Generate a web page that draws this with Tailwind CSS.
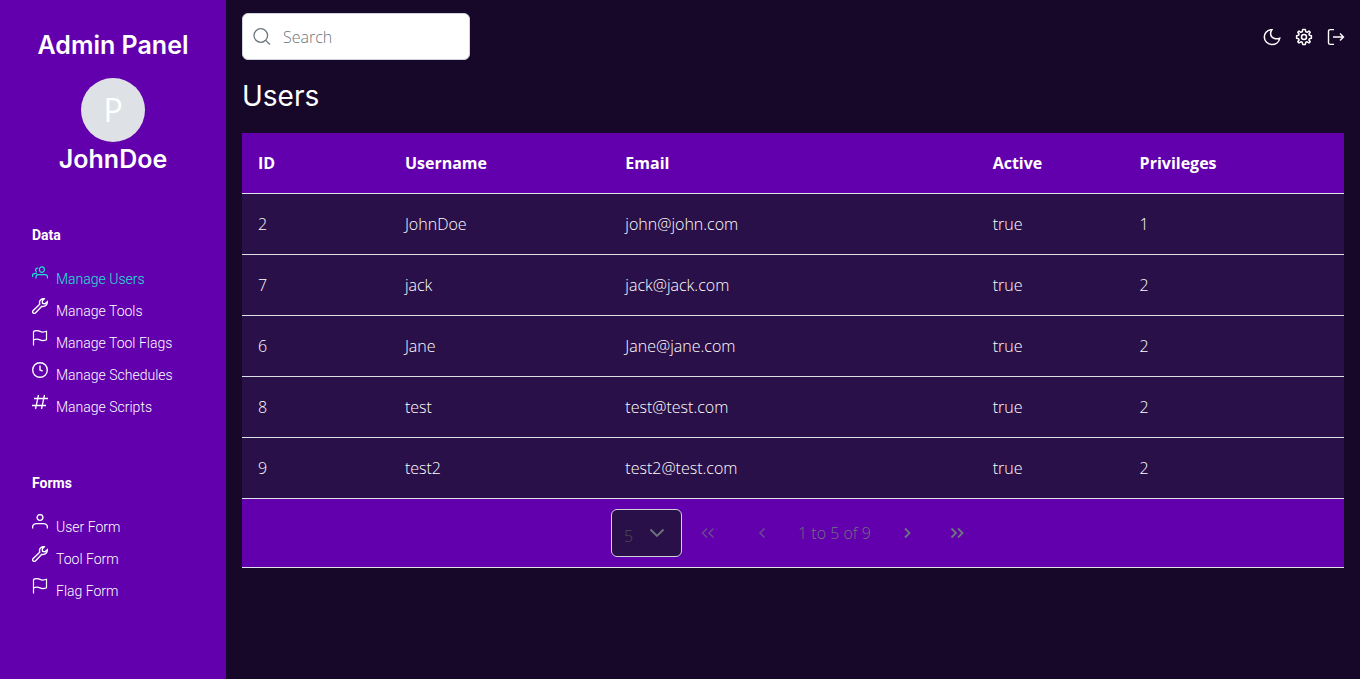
<!DOCTYPE html>
<html lang="en">
<head>
<meta charset="utf-8">
<meta name="viewport" content="width=device-width, initial-scale=1">
<title>Admin Panel</title>
<script src="https://cdn.jsdelivr.net/npm/@tailwindcss/browser@4"></script>
</head>
<body class="min-h-screen bg-[#170729] font-['Open_Sans',sans-serif] text-base font-light text-white">
<svg class="hidden">
  <defs>
    <symbol id="wrench" viewBox="0 0 16 16"><path d="M12.2.8C10 .3 7.400 2 7.500 4.500L7.700 6.200L1 12.700C.4 13.400.4 14.300 1.100 14.900C1.800 15.600 2.700 15.600 3.400 14.900L9.800 8.300C12.800 9.200 15.600 7 15.300 3.600L13 5.700L10.600 5.400L10.200 3Z"/></symbol>
    <symbol id="flag" viewBox="0 0 16 16"><path d="M1.500 15.500V1.500C4 0 6 .4 8 1.400C10 2.400 12 2.300 14.500 1.300V9.800C12 10.900 10 10.900 8 9.900C6 8.900 4 8.900 1.500 10"/></symbol>
    <symbol id="user" viewBox="0 0 16 16"><circle cx="8" cy="3.500" r="2.900"/><path d="M.6 14.500V13C.6 11 2.500 9.600 4.500 9.600H11.500C13.500 9.600 15.400 11 15.400 13V14.500"/></symbol>
  </defs>
</svg>
<div class="flex min-h-screen">
  <aside class="w-[226px] shrink-0 bg-[#6200ad] px-8 pt-7">
    <header class="flex flex-col items-center font-['Inter',sans-serif] text-[25px] font-semibold">
      <h1 class="leading-[34px] whitespace-nowrap">Admin Panel</h1>
      <div class="mt-4 flex size-16 items-center justify-center rounded-full bg-[#dee2e6] font-['Open_Sans',sans-serif] text-[32px] font-normal">P</div>
      <p class="leading-[34px]">JohnDoe</p>
    </header>
    <nav class="font-['Roboto',sans-serif] text-sm">
      <h2 class="mt-[49px] leading-5 font-bold">Data</h2>
      <ul class="mt-[17px]">
        <li><a href="#" class="flex h-8 gap-2 text-[#22e0d5]">
          <svg class="mt-1 size-4" viewBox="0 0 16 16" fill="none" stroke="currentColor" stroke-width="1.200"><ellipse cx="9.900" cy="3.600" rx="2.500" ry="2.800"/><path d="M6.200 2.200C3.500 1.500 2.600 4.600 4.800 5.800M4 12.500V11C4 9.600 5.200 8.700 6.500 8.700H13C14.500 8.700 15.500 9.600 15.500 11V12.500M.5 11V9.500C.5 8.200 1.700 7.300 3.500 7.300H5"/></svg>
          <span class="mt-[7px] leading-5">Manage Users</span></a></li>
        <li><a href="#" class="flex h-8 gap-2"><svg class="mt-1 size-4" fill="none" stroke="currentColor" stroke-width="1.400"><use href="#wrench"/></svg><span class="mt-[7px] leading-5">Manage Tools</span></a></li>
        <li><a href="#" class="flex h-8 gap-2"><svg class="mt-1 size-4" fill="none" stroke="currentColor" stroke-width="1.200"><use href="#flag"/></svg><span class="mt-[7px] leading-5">Manage Tool Flags</span></a></li>
        <li><a href="#" class="flex h-8 gap-2"><svg class="mt-1 size-4" viewBox="0 0 16 16" fill="none" stroke="currentColor" stroke-width="1.400"><circle cx="8" cy="8" r="7.300"/><path d="M8 3.500V8L10.700 9.200"/></svg><span class="mt-[7px] leading-5">Manage Schedules</span></a></li>
        <li><a href="#" class="flex h-8 gap-2"><svg class="mt-1 size-4" viewBox="0 0 16 16" fill="none" stroke="currentColor" stroke-width="1.300"><path d="M6.500 1L3.500 15M12.500 1L9.500 15M2 4.500H16M0 11.500H14"/></svg><span class="mt-[7px] leading-5">Manage Scripts</span></a></li>
      </ul>
      <h2 class="mt-[51px] leading-5 font-bold">Forms</h2>
      <ul class="mt-[17px]">
        <li><a href="#" class="flex h-8 gap-2"><svg class="mt-1 size-4" fill="none" stroke="currentColor" stroke-width="1.400"><use href="#user"/></svg><span class="mt-[7px] leading-5">User Form</span></a></li>
        <li><a href="#" class="flex h-8 gap-2"><svg class="mt-1 size-4" fill="none" stroke="currentColor" stroke-width="1.400"><use href="#wrench"/></svg><span class="mt-[7px] leading-5">Tool Form</span></a></li>
        <li><a href="#" class="flex h-8 gap-2"><svg class="mt-1 size-4" fill="none" stroke="currentColor" stroke-width="1.200"><use href="#flag"/></svg><span class="mt-[7px] leading-5">Flag Form</span></a></li>
      </ul>
    </nav>
  </aside>
  <main class="min-w-0 flex-1 px-4 pt-[13px]">
    <div class="flex items-center justify-between">
      <label class="flex h-[47px] w-[228px] items-center gap-3 rounded-md border border-[#ced4da] bg-white px-[10px] text-[#6c757d]">
        <svg class="size-[18px] shrink-0" viewBox="0 0 18 18" fill="none" stroke="currentColor" stroke-width="1.300"><circle cx="7.800" cy="7.500" r="6.800"/><path d="M12.700 12.400L17 16.500"/></svg>
        <input type="text" aria-label="Search" placeholder="Search" class="w-full min-w-0 bg-transparent outline-none placeholder:text-[#6c757d]">
      </label>
      <div class="flex gap-4">
        <button type="button" aria-label="Toggle dark mode"><svg class="size-4 overflow-visible" viewBox="0 0 16 16" fill="none" stroke="currentColor" stroke-width="1.500"><path d="M6.500.8C2.900 1.400.3 4.500.3 8C.3 12.200 3.700 15.500 7.900 15.500C11.800 15.500 15 13 15.700 9.300C12.500 10.500 8 9.800 6.900 6.300C6.300 4.500 6.700 2.500 7.800.8Z"/></svg></button>
        <button type="button" aria-label="Settings"><svg class="size-4 overflow-visible" viewBox="0 0 16 16" fill="none" stroke="currentColor" stroke-width="1.500" stroke-linejoin="round"><circle cx="8" cy="8" r="2.500"/><path d="M6.700.6H9.300L9.800 2.800L11.200 3.300L13 2L14.200 3.300L12.900 5L13.400 6.300L15.400 6.700V9.300L13.400 9.700L12.900 11L14.200 12.800L13 14L11.200 12.800L9.800 13.300L9.300 15.400H6.700L6.200 13.300L4.800 12.800L3 14L1.800 12.800L3.100 11L2.600 9.700L.6 9.300V6.700L2.600 6.300L3.100 5L1.800 3.300L3 2L4.800 3.300L6.200 2.800Z"/></svg></button>
        <button type="button" aria-label="Log out"><svg class="size-4 overflow-visible" viewBox="0 0 16 16" fill="none" stroke="currentColor" stroke-width="1.400"><path d="M6 .6H2.200C1.100.6.500 1.200.500 2.200V13.800C.5 14.800 1.100 15.400 2.200 15.400H6M5 8H15.500M12 4.500L15.500 8L12 11.500"/></svg></button>
      </div>
    </div>
    <h2 class="mt-4 font-['Inter',sans-serif] text-[28px] leading-10 font-normal">Users</h2>
    <table class="mt-[17px] w-full table-fixed border-separate border-spacing-0 text-left [&_td]:border-b [&_td]:border-[#dee2e6] [&_td]:px-4 [&_th]:border-b [&_th]:border-[#dee2e6] [&_th]:px-4">
      <colgroup><col class="w-[13.333%]"><col class="w-1/5"><col class="w-1/3"><col class="w-[13.333%]"><col class="w-1/5"></colgroup>
      <thead class="bg-[#6200ad] font-semibold">
        <tr class="h-[61px]"><th>ID</th><th>Username</th><th>Email</th><th>Active</th><th>Privileges</th></tr>
      </thead>
      <tbody class="bg-[#2a1048]">
        <tr class="h-[61px]"><td>2</td><td>JohnDoe</td><td>john@john.com</td><td>true</td><td>1</td></tr>
        <tr class="h-[61px]"><td>7</td><td>jack</td><td>jack@jack.com</td><td>true</td><td>2</td></tr>
        <tr class="h-[61px]"><td>6</td><td>Jane</td><td>Jane@jane.com</td><td>true</td><td>2</td></tr>
        <tr class="h-[61px]"><td>8</td><td>test</td><td>test@test.com</td><td>true</td><td>2</td></tr>
        <tr class="h-[61px]"><td>9</td><td>test2</td><td>test2@test.com</td><td>true</td><td>2</td></tr>
      </tbody>
    </table>
    <div class="flex h-[69px] items-center justify-center border-b border-[#dee2e6] bg-[#6200ad] text-[#6c757d]">
      <div class="mr-1 grid h-12 w-[71px] items-center rounded-md border border-[#ced4da] bg-[#2a1048]">
        <select aria-label="Rows per page" class="col-start-1 row-start-1 h-full w-full appearance-none bg-transparent pt-1.5 pl-3 text-[#495057]"><option class="bg-[#2a1048]">5</option><option class="bg-[#2a1048]">10</option></select>
        <svg class="pointer-events-none col-start-1 row-start-1 mr-4 size-4 justify-self-end" viewBox="0 0 16 16" fill="none" stroke="currentColor" stroke-width="1.800"><path d="M1.500 4.500L8 11L14.500 4.500"/></svg>
      </div>
      <button type="button" disabled aria-label="First page" class="flex h-12 w-11 items-center justify-center opacity-60"><svg class="size-4" viewBox="0 0 16 16" fill="none" stroke="currentColor" stroke-width="1.600"><path d="M7 3.500L2.500 8L7 12.500M13.500 3.500L9 8L13.500 12.500"/></svg></button>
      <button type="button" disabled aria-label="Previous page" class="ml-1 flex h-12 w-14 items-center justify-center opacity-60"><svg class="size-4" viewBox="0 0 16 16" fill="none" stroke="currentColor" stroke-width="1.600"><path d="M10.500 3.500L6 8L10.500 12.500"/></svg></button>
      <span class="px-2 whitespace-nowrap">1 to 5 of 9</span>
      <button type="button" aria-label="Next page" class="flex h-12 w-14 items-center justify-center"><svg class="size-4" viewBox="0 0 16 16" fill="none" stroke="currentColor" stroke-width="1.800"><path d="M6 3.500L10.500 8L6 12.500"/></svg></button>
      <button type="button" aria-label="Last page" class="ml-1 flex h-12 w-9 items-center justify-center"><svg class="size-4" viewBox="0 0 16 16" fill="none" stroke="currentColor" stroke-width="1.800"><path d="M2.500 3.500L7 8L2.500 12.500M9 3.500L13.500 8L9 12.500"/></svg></button>
    </div>
  </main>
</div>
</body>
</html>
